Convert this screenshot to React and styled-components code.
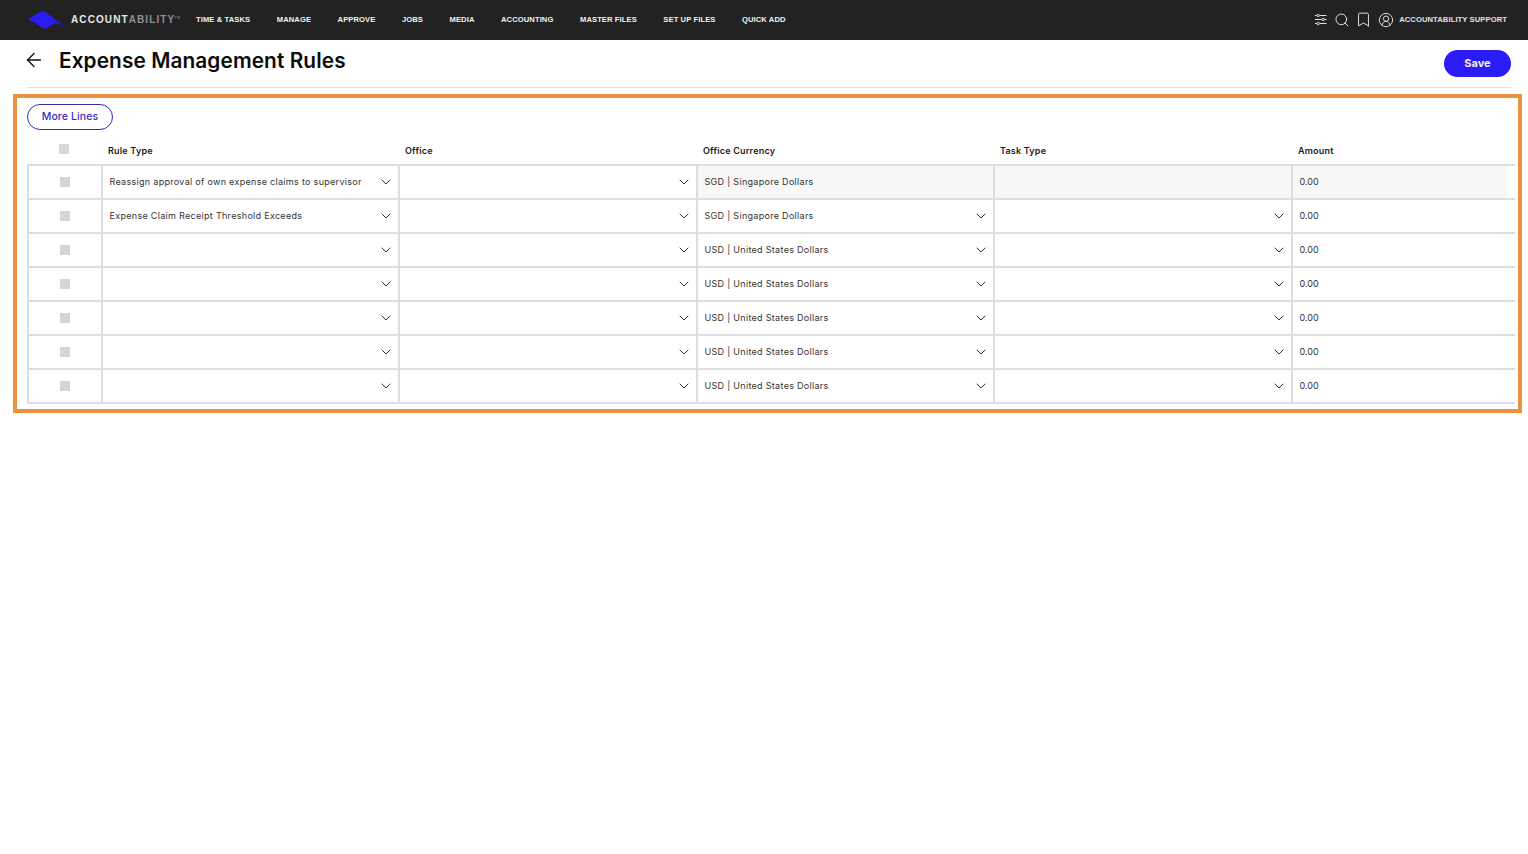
import React from 'react';
import styled, { createGlobalStyle } from 'styled-components';
import { ChevronDown, ArrowLeft, Search, Bookmark, CircleUserRound } from 'lucide-react';

const GlobalStyle = createGlobalStyle`
    body {
        margin: 0;
        background: #fff;
        font-family: "Inter", "Liberation Sans", sans-serif;
    }
`;

const TopBar = styled.header`
    display: flex;
    align-items: center;
    box-sizing: border-box;
    height: 40px;
    padding: 0 21px 1px 28px;
    background-color: #222222;
    color: #f2f2f2;
`;

const Brand = styled.div`
    display: flex;
    align-items: center;
    gap: 3px;
    width: 168px;
    font-family: "Liberation Sans", sans-serif;
    font-size: 10px;
    font-weight: 700;
    letter-spacing: 1.1px;
    color: #8f8f8f;
    b {
        color: #e8e8e8;
    }
    sup {
        font-size: 4px;
        font-weight: 400;
        letter-spacing: 0;
        margin: -5px 0 0 -4px;
    }
`;

const Nav = styled.nav`
    display: flex;
    gap: 26.5px;
    flex: 1;
`;

const NavItem = styled.span`
    font-family: "Liberation Sans", sans-serif;
    font-weight: 700;
    font-size: 7.6px;
    letter-spacing: 0.1px;
    white-space: nowrap;
`;

const Tools = styled.div`
    display: flex;
    align-items: center;
    gap: 5.5px;
    color: #e2e2e2;
`;

const TitleRow = styled.div`
    display: flex;
    align-items: center;
    height: 47px;
    margin: 0 17px 0 27px;
    border-bottom: 1px solid #e2e2e2;
    color: #111;
`;

const Title = styled.h1`
    flex: 1;
    margin: -7px 0 0 14px;
    font-size: 20.8px;
    font-weight: 600;
    letter-spacing: 0.1px;
    color: #0c0c0c;
`;

const BackIcon = styled(ArrowLeft)`
    margin: -7px 0 0 -4px;
`;

const SaveButton = styled.button`
    width: 67px;
    height: 27px;
    padding: 0 0 1px;
    border: none;
    border-radius: 14px;
    background-color: #2b1cf5;
    color: #f0f0f0;
    font-family: inherit;
    font-size: 11px;
    font-weight: 700;
`;

const Highlight = styled.section`
    height: 305px;
    margin: 6px 6px 0 13px;
    padding: 6px 0 0 10px;
    border: 4px solid #ec9140;
`;

const MoreLines = styled.button`
    display: block;
    width: 86px;
    height: 26px;
    padding: 0 0 2px;
    border: 1px solid #3a2ab0;
    border-radius: 13px;
    background: #fff;
    color: #3d2cc4;
    font-family: inherit;
    font-size: 10.5px;
    font-weight: 500;
    letter-spacing: 0.1px;
`;

const Columns = styled.div`
    display: grid;
    grid-template-columns: 74px 297px 298px 297px 298px 224px;
`;

const HeadRow = styled(Columns)`
    height: 34px;
    align-items: end;
`;

const HeadLabel = styled.div`
    padding: 0 0 8px 7px;
    font-size: 9px;
    font-weight: 600;
    letter-spacing: 0.2px;
    color: #1c1c1c;
`;

const HeadCheckCell = styled.div`
    display: flex;
    justify-content: center;
    align-self: stretch;
    padding: 14px 0 0;
`;

const Check = styled.span`
    display: block;
    width: 10px;
    height: 10px;
    background-color: #d6d6d6;
`;

const Body = styled.div`
    width: 1488px;
    border-top: 2px solid #dedede;
`;

const Row = styled(Columns)`
    height: 34px;
    box-sizing: border-box;
    border-bottom: 2px solid #dedede;
`;

const Cell = styled.div`
    display: flex;
    align-items: center;
    justify-content: space-between;
    box-sizing: border-box;
    padding: 0 4px 1px 6.5px;
    border-left: 2px solid #dedede;
    background-color: ${({ $disabled }) => ($disabled ? '#f8f8f8' : '#fff')};
    font-size: 9px;
    letter-spacing: 0.3px;
    color: #333;
    white-space: nowrap;
`;

const CheckCell = styled(Cell)`
    justify-content: center;
    padding: 0;
`;

const AmountCell = styled(Cell)`
    margin-right: ${({ $disabled }) => ($disabled ? '8px' : '0')};
    letter-spacing: 0;
`;

const Caret = styled(ChevronDown).attrs({ size: 16, strokeWidth: 1.5 })`
    flex: none;
    margin-left: auto;
    color: #333;
`;

const navItems = ['TIME & TASKS', 'MANAGE', 'APPROVE', 'JOBS', 'MEDIA', 'ACCOUNTING', 'MASTER FILES', 'SET UP FILES', 'QUICK ADD'];

const rows = [
    { rule: 'Reassign approval of own expense claims to supervisor', currency: 'SGD | Singapore Dollars', locked: true },
    { rule: 'Expense Claim Receipt Threshold Exceeds', currency: 'SGD | Singapore Dollars' },
    { rule: '', currency: 'USD | United States Dollars' },
    { rule: '', currency: 'USD | United States Dollars' },
    { rule: '', currency: 'USD | United States Dollars' },
    { rule: '', currency: 'USD | United States Dollars' },
    { rule: '', currency: 'USD | United States Dollars' },
];

const Logo = () => (
    <svg width="40" height="24" viewBox="0 0 40 24">
        <defs>
            <linearGradient id="logoTail" x1="0.6" y1="0" x2="1" y2="0">
                <stop offset="0" stopColor="#2b1cf5" />
                <stop offset="1" stopColor="#1a1660" />
            </linearGradient>
        </defs>
        <polygon points="0,11 15,2.5 27,11 40,20 27,15 17,21" fill="url(#logoTail)" />
    </svg>
);

const SlidersIcon = () => (
    <svg width="15" height="15" viewBox="0 0 15 15" fill="none" stroke="currentColor" strokeWidth="1">
        <path d="M2 3.5h2M6.5 3.5h7M2 7.5h7M11.5 7.5h2M2 11.5h2M6.5 11.5h7" />
        <circle cx="5.2" cy="3.5" r="1.2" />
        <circle cx="10.2" cy="7.5" r="1.2" />
        <circle cx="5.2" cy="11.5" r="1.2" />
    </svg>
);

const App = () => {
    return (
        <>
            <GlobalStyle />
            <TopBar>
                <Brand>
                    <Logo />
                    <span><b>ACCOUNT</b>ABILITY</span>
                    <sup>TM</sup>
                </Brand>
                <Nav>
                    {navItems.map((item) => <NavItem key={item}>{item}</NavItem>)}
                </Nav>
                <Tools>
                    <SlidersIcon />
                    <Search size={16} strokeWidth={1.5} />
                    <Bookmark size={17} strokeWidth={1.4} />
                    <CircleUserRound size={16} strokeWidth={1.4} />
                    <NavItem>ACCOUNTABILITY SUPPORT</NavItem>
                </Tools>
            </TopBar>
            <TitleRow>
                <BackIcon size={22} strokeWidth={1.5} />
                <Title>Expense Management Rules</Title>
                <SaveButton>Save</SaveButton>
            </TitleRow>
            <Highlight>
                <MoreLines>More Lines</MoreLines>
                <HeadRow>
                    <HeadCheckCell><Check /></HeadCheckCell>
                    <HeadLabel>Rule Type</HeadLabel>
                    <HeadLabel>Office</HeadLabel>
                    <HeadLabel>Office Currency</HeadLabel>
                    <HeadLabel>Task Type</HeadLabel>
                    <HeadLabel>Amount</HeadLabel>
                </HeadRow>
                <Body>
                    {rows.map((row, i) => (
                        <Row key={i}>
                            <CheckCell><Check /></CheckCell>
                            <Cell>{row.rule}<Caret /></Cell>
                            <Cell><Caret /></Cell>
                            <Cell $disabled={row.locked}>{row.currency}{!row.locked && <Caret />}</Cell>
                            <Cell $disabled={row.locked}>{!row.locked && <Caret />}</Cell>
                            <AmountCell $disabled={row.locked}>0.00</AmountCell>
                        </Row>
                    ))}
                </Body>
            </Highlight>
        </>
    );
};

export default App;
